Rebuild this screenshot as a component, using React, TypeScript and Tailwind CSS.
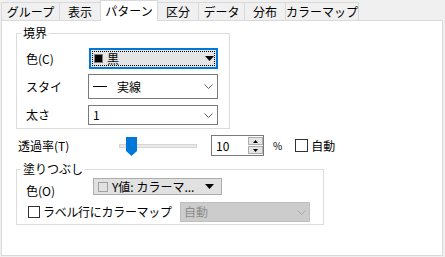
import React from "react";

function Chevron({ color = "#606060", className = "" }: { color?: string; className?: string }) {
  return (
    <svg className={className} width="9" height="5" viewBox="0 0 9 5">
      <polyline points="0.5,0.5 4.5,4.5 8.5,0.5" fill="none" stroke={color} strokeWidth="1" />
    </svg>
  );
}

function Tri({ className = "" }: { className?: string }) {
  return (
    <svg className={className} width="9" height="5" viewBox="0 0 9 5">
      <polygon points="0,0 9,0 4.5,5" fill="#000" />
    </svg>
  );
}

export default function App() {
  return (
    <div className="w-[445px] h-[257px] bg-[#f0f0f0] text-[12px] text-black font-['Noto_Sans_CJK_JP','Noto_Sans',sans-serif] leading-none overflow-hidden">
      {/* Tabs */}
      <div className="flex items-end h-[20px] ml-[1px]">
        <div className="w-[58px] h-[18px] border-t border-l border-[#d9d9d9] bg-[#f0f0f0] flex items-center justify-center">グループ</div>
        <div className="w-[41px] h-[18px] border-t border-l border-[#d9d9d9] bg-[#f0f0f0] flex items-center justify-center">表示</div>
        <div className="relative z-10 -mb-px w-[58px] h-[21px] border-t border-l border-r border-[#d9d9d9] bg-white flex items-center justify-center">パターン</div>
        <div className="w-[40px] h-[18px] border-t border-[#d9d9d9] bg-[#f0f0f0] flex items-center justify-center">区分</div>
        <div className="w-[46px] h-[18px] border-t border-l border-[#d9d9d9] bg-[#f0f0f0] flex items-center justify-center">データ</div>
        <div className="w-[41px] h-[18px] border-t border-l border-[#d9d9d9] bg-[#f0f0f0] flex items-center justify-center">分布</div>
        <div className="w-[74px] h-[18px] border-t border-l border-r border-[#d9d9d9] bg-[#f0f0f0] flex items-center justify-center">カラーマップ</div>
      </div>

      {/* Panel */}
      <div className="ml-[1px] w-[442px] h-[236px] border border-[#d9d9d9] bg-white">
        {/* 境界 */}
        <fieldset className="ml-[14px] mt-[4px] w-[214px] h-[104px] border border-[#dcdcdc]">
          <legend className="ml-[4px] px-[2px] leading-[16px]">境界</legend>
          <div className="flex flex-col pl-[9px]">
            <div className="flex items-center h-[21px] mt-[7px]">
              <span className="w-[63px]">色(C)</span>
              <div className="w-[129px] h-[21px] border-2 border-[#0078d7] bg-[#e5e5e5] p-px">
                <div className="h-full border border-dotted border-black flex items-center pl-px">
                  <span className="w-[9px] h-[9px] bg-black border border-[#808080]" />
                  <span className="ml-[4px]">黒</span>
                  <Tri className="ml-auto" />
                </div>
              </div>
            </div>
            <div className="flex items-center h-[25px] mt-[5px]">
              <span className="w-[62px]">スタイ</span>
              <div className="w-[130px] h-[25px] border border-[#7a7a7a] bg-white flex items-center pl-[4px] pr-[4px]">
                <span className="w-[14px] h-px bg-black" />
                <span className="ml-[10px]">実線</span>
                <Chevron className="ml-auto" />
              </div>
            </div>
            <div className="flex items-center h-[20px] mt-[6px]">
              <span className="w-[62px]">太さ</span>
              <div className="w-[130px] h-[20px] border border-[#7a7a7a] bg-white flex items-center pl-[4px] pr-[4px]">
                <span>1</span>
                <Chevron className="ml-auto" />
              </div>
            </div>
          </div>
        </fieldset>

        {/* 透過率 */}
        <div className="flex items-center h-[21px] mt-[6px] ml-[16px]">
          <span className="w-[101px]">透過率(T)</span>
          <div className="relative w-[78px] h-[21px] flex items-center">
            <div className="w-full h-[4px] border border-[#d6d6d6] bg-[#e7eaea]" />
            <svg className="absolute left-[7px] top-[2px]" width="11" height="19" viewBox="0 0 11 19">
              <polygon points="0,0 11,0 11,14 5.5,19 0,14" fill="#0078d7" />
            </svg>
          </div>
          <div className="ml-[14px] w-[53px] h-[21px] border border-[#7a7a7a] bg-white flex">
            <span className="pl-[4px] self-center">10</span>
            <div className="ml-auto w-[15px] flex flex-col py-px gap-px">
              <div className="h-[8px] bg-[#e5e5e5] border border-[#adadad] flex items-center justify-center">
                <svg width="5" height="3" viewBox="0 0 5 3"><polygon points="2.5,0 5,3 0,3" fill="#000" /></svg>
              </div>
              <div className="h-[8px] bg-[#e5e5e5] border border-[#adadad] flex items-center justify-center">
                <svg width="5" height="3" viewBox="0 0 5 3"><polygon points="0,0 5,0 2.5,3" fill="#000" /></svg>
              </div>
            </div>
          </div>
          <span className="ml-[9px] text-[10px]">%</span>
          <span className="ml-[13px] w-[13px] h-[13px] border border-[#333333] bg-white" />
          <span className="ml-[3px]">自動</span>
        </div>

        {/* 塗りつぶし */}
        <fieldset className="ml-[14px] mt-[5px] w-[308px] h-[64px] border border-[#dcdcdc]">
          <legend className="ml-[4px] px-[2px] leading-[16px]">塗りつぶし</legend>
          <div className="flex flex-col">
            <div className="flex items-center h-[17px] mt-[1px] pl-[9px]">
              <span className="w-[67px] pt-[8px]">色(O)</span>
              <div className="w-[129px] h-[17px] bg-[#e1e1e1] border border-[#adadad] flex items-center pl-[4px]">
                <span className="w-[10px] h-[10px] border border-[#a0a0a0]" />
                <span className="ml-[4px]">Y値: カラーマ...</span>
                <Tri className="ml-auto mr-[7px]" />
              </div>
            </div>
            <div className="flex items-center h-[20px] mt-[7px] pl-[11px]">
              <span className="w-[12px] h-[12px] border border-[#333333] bg-white" />
              <span className="ml-[3px] w-[137px] whitespace-nowrap tracking-[-0.3px]">ラベル行にカラーマップ</span>
              <div className="w-[130px] h-[20px] bg-[#cccccc] border border-[#bfbfbf] flex items-center pl-[3px] text-[#8c8c8c]">
                <span>自動</span>
                <Chevron className="ml-auto mr-[3px]" color="#a8a8a8" />
              </div>
            </div>
          </div>
        </fieldset>
      </div>
    </div>
  );
}
